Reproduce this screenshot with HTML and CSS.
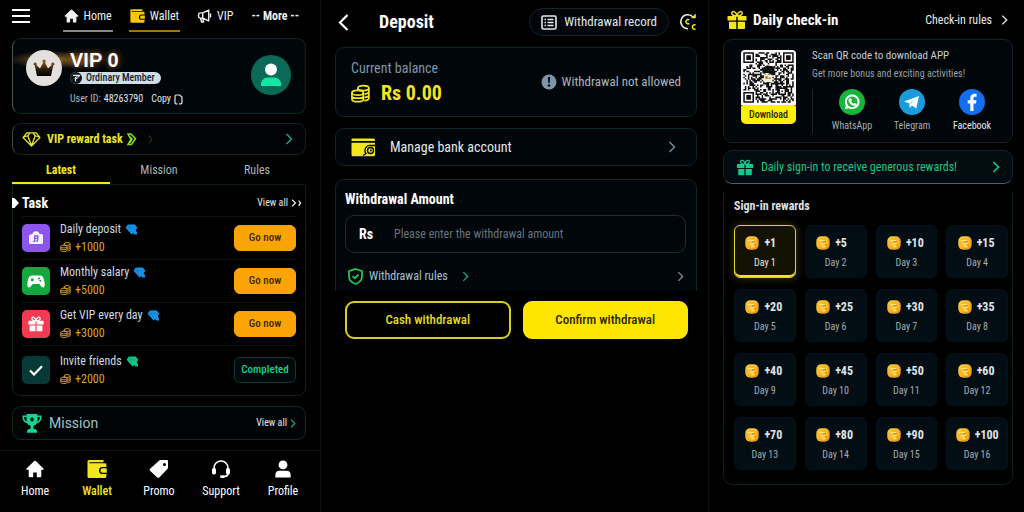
FILE: index.html
```html
<!DOCTYPE html>
<html lang="en">
<head>
<meta charset="utf-8">
<meta name="viewport" content="width=device-width, initial-scale=1">
<title>Wallet</title>
<link rel="stylesheet" href="styles.css">
</head>
<body>
<svg class="defs" aria-hidden="true">
  <defs>
    <linearGradient id="gold" x1="0" y1="0" x2="1" y2="1"><stop offset="0" stop-color="#ffd84a"/><stop offset="1" stop-color="#e88a08"/></linearGradient>
    <linearGradient id="crown-fill" x1="0" y1="0" x2="0" y2="1"><stop offset="0" stop-color="#9a6a1c"/><stop offset=".6" stop-color="#2a1a06"/><stop offset="1" stop-color="#000"/></linearGradient>
  </defs>
  <symbol id="i-home" viewBox="0 0 20 20"><path fill="currentColor" d="M10 .8a1.2 1.2 0 0 1 .9.4l8.500 8.200c.6.7.2 1.500-.6 1.500H17v7.100a1.200 1.200 0 0 1-1.200 1.200H12v-5.400H8v5.400H4.200A1.200 1.200 0 0 1 3 18v-7.100H1.200c-.8 0-1.200-.8-.6-1.500l8.500-8.200a1.200 1.200 0 0 1 .9-.4z"/></symbol>
  <symbol id="i-wallet" viewBox="0 0 20 18"><path fill="currentColor" d="M2 0h14.500v2.200H2.200v1H18a1.400 1.400 0 0 1 1.400 1.400V7H15.500a3.500 3.500 0 0 0 0 7h3.900v2.600A1.400 1.400 0 0 1 18 18H2a1.500 1.500 0 0 1-1.500-1.500V1.500A1.500 1.500 0 0 1 2 0z"/><path fill="currentColor" d="M15.600 8.300h4.200v4.400h-4.200a2.200 2.200 0 0 1 0-4.400z"/></symbol>
  <symbol id="i-horn" viewBox="0 0 20 20"><path fill="none" stroke="currentColor" stroke-width="2" stroke-linejoin="round" stroke-linecap="round" d="M7.500 5.500H4.200A2.700 2.700 0 0 0 1.500 8v2.500A2.500 2.500 0 0 0 4 13h3.500l8.500 4V1.500zM7.500 5.500V13M4.500 13.500l1.300 5h3l-1.300-5M18.600 7v4.500"/></symbol>
  <symbol id="i-chev" viewBox="0 0 8 12"><path fill="none" stroke="currentColor" stroke-width="1.600" d="M1.500 1l5 5-5 5"/></symbol>
  <symbol id="i-gem" viewBox="0 0 20 16"><path fill="none" stroke="currentColor" stroke-width="1.400" stroke-linejoin="round" d="M5 1h10l4 5-9 9-9-9zM1.500 5.500L6 4l1.500 4L10 14.500 12.500 8 14 4l4.500 1.500M6 4l2-2.500M14 4l-2-2.500"/></symbol>
  <symbol id="i-gemfill" viewBox="0 0 14 12"><path fill="currentColor" d="M3 .5h7.500L13.500 4l-2 2.800L13 9v2.500h-3L9 9.800l-2 1.700L.5 4z"/><path fill="none" stroke="#000" stroke-opacity=".2" stroke-width=".6" d="M1 4.200h11.500M5 1L4.500 4.200 7 10"/></symbol>
  <symbol id="i-coins" viewBox="0 0 20 19"><g fill="none" stroke="currentColor" stroke-width="1.800"><ellipse cx="13" cy="3.800" rx="5.800" ry="2.700"/><path d="M18.800 4v10.500c0 1.300-2 2.300-5 2.500M18.800 7.500c0 1.400-1.900 2.400-4.600 2.700M18.800 11c0 1.400-1.900 2.300-4.600 2.600M7.200 4v2"/><ellipse cx="7" cy="8.700" rx="6" ry="2.600"/><path d="M1 8.700v6.800c0 3.500 12 3.500 12 0V8.700M1 12c0 3.300 12 3.300 12 0"/></g></symbol>
  <symbol id="i-gift" viewBox="0 0 20 20"><path fill="currentColor" d="M1 6h8.300v4.500H.5v-4A.5.500 0 0 1 1 6zM10.700 6H19a.5.500 0 0 1 .5.500v4h-8.800zM2 11.800h7.300V19H3a1 1 0 0 1-1-1zM10.700 11.800H18V18a1 1 0 0 1-1 1h-6.300z"/><path fill="none" stroke="currentColor" stroke-width="1.500" d="M10 6C7 6 4.500 5 4.800 2.800 5.200.7 8.800.8 10 5.800 11.200.8 14.800.7 15.200 2.800 15.500 5 13 6 10 6z"/></symbol>
  <symbol id="i-user" viewBox="0 0 20 20"><circle cx="10" cy="5.500" r="4.900" fill="currentColor"/><path fill="currentColor" d="M1.500 19.500v-3A4.700 4.700 0 0 1 6.200 12h7.600a4.700 4.700 0 0 1 4.700 4.500v3z"/></symbol>
  <symbol id="i-coin" viewBox="0 0 14 14"><rect x=".3" y=".3" width="13.400" height="13.400" rx="4.800" fill="url(#gold)"/><rect x="1.800" y="1.600" width="10" height="10" rx="3.800" fill="#fcb92a"/><path d="M3 5.200c2-2 3.600.3 6-1M4.500 8.200h3l2-1.500M6.500 10.500h3" stroke="#ffe98c" stroke-width="1.300" fill="none"/><path d="M7 5.800h3M9 9h2" stroke="#c87405" stroke-width=".9" fill="none"/></symbol>
</svg>

<main class="screens">
  <section class="screen home">
    <header class="topbar">
      <button class="plain menu" aria-label="Menu"><svg width="18" height="14" viewBox="0 0 18 14"><path d="M0 1h18M0 7h18M0 13h18" stroke="#fff" stroke-width="2"/></svg></button>
      <nav class="topnav">
        <a href="#" class="on-home"><svg width="15" height="14"><use href="#i-home"/></svg>Home</a>
        <a href="#" class="on-wallet"><svg class="amber" width="15" height="14"><use href="#i-wallet"/></svg>Wallet</a>
        <a href="#"><svg width="15" height="14"><use href="#i-horn"/></svg>VIP</a>
        <a href="#" class="more">-- More --</a>
      </nav>
    </header>

    <section class="card profile">
      <span class="crown"><svg width="22" height="18" viewBox="0 0 22 18"><path fill="url(#crown-fill)" d="M4 17L1.800 6.500a1.500 1.500 0 1 1 1.500-.5L7 9.500l3.200-6A1.600 1.600 0 1 1 12 3.500l3 6L18.700 6a1.500 1.500 0 1 1 1.500.5L18 17z"/></svg></span>
      <div class="who">
        <h1>VIP 0</h1>
        <span class="badge"><svg width="12" height="12" viewBox="0 0 12 12"><circle cx="6" cy="6" r="6" fill="#10171c"/><path d="M3 3.300h6.500L8.500 5H5.500M4.500 6.500h3M5.500 5v4.500" stroke="#dfe9ee" stroke-width="1.200" fill="none"/></svg>Ordinary Member</span>
        <p class="uid"><span>User ID:</span> 48263790 <button class="plain copy">Copy<svg width="9" height="11" viewBox="0 0 9 11"><path d="M3.500 9.800H2A1 1 0 0 1 1 8.800V2.500A1.500 1.500 0 0 1 2.500 1h3L8 3v5.500a1.300 1.300 0 0 1-1.300 1.300H5" fill="none" stroke="#e3e8ea" stroke-width="1.200"/></svg></button></p>
      </div>
      <span class="avatar"><svg width="22" height="24" viewBox="0 0 22 24"><circle cx="11" cy="6.500" r="6" fill="#fff"/><path d="M1 23v-2a6.500 6.500 0 0 1 6.500-6.500h7A6.500 6.500 0 0 1 21 21v2z" fill="#12e8a4"/></svg></span>
    </section>

    <a href="#" class="card rewardbar">
      <svg width="19" height="15"><use href="#i-gem"/></svg>
      <span>VIP reward task</span>
      <svg class="swoosh" width="28" height="13" viewBox="0 0 28 13"><path d="M1 1h3l4.500 4.500-4 6H1l3-5zM3 4l2 2-2 4" fill="none" stroke="#7fe02a" stroke-width="1.500"/><path d="M22 2.500l3 4-3 4" fill="none" stroke="#1d4a33" stroke-width="1.200" stroke-dasharray="2 1"/></svg>
      <svg class="end teal" width="8" height="12"><use href="#i-chev"/></svg>
    </a>

    <div class="tabs" role="tablist">
      <button class="plain tab selected" role="tab" aria-selected="true">Latest</button>
      <button class="plain tab" role="tab" aria-selected="false">Mission</button>
      <button class="plain tab" role="tab" aria-selected="false">Rules</button>
    </div>

    <section class="tasks">
      <header class="tasks-head">
        <h2><svg width="7" height="10" viewBox="0 0 7 10"><path d="M0 0h2.500L7 5 2.500 10H0z" fill="#fff"/></svg>Task</h2>
        <a href="#" class="viewall">View all<svg width="12" height="8" viewBox="0 0 12 8"><path d="M1 .8L4.500 4 1 7.200" fill="none" stroke="#dfe6e8" stroke-width="1.300"/><path d="M7 1.500h1.500l2 2.500-2 3H7l1.500-3z" fill="#cdd6d8"/></svg></a>
      </header>
      <ul class="tasklist">
        <li>
          <span class="tile violet"><svg width="16" height="16" viewBox="0 0 16 16"><path fill="#f6f2ff" d="M2.500 4.500l2-.5C5 2 6 1 8.500 1.200 10.500 1.400 11 2.500 11.500 4h2A1.500 1.500 0 0 1 15 5.500v7a1.500 1.500 0 0 1-1.500 1.500h-11A1.500 1.500 0 0 1 1 12.500V6a1.500 1.500 0 0 1 1.500-1.500z"/><path d="M5 11.300h1.700V6H10l-.4 4.500M6.700 8.300h3M8.300 11h1.700" fill="none" stroke="#8b55ee" stroke-width="1.300"/></svg></span>
          <div class="info"><h3>Daily deposit<svg width="13" height="11"><use href="#i-gemfill"/></svg></h3><p><svg width="11" height="10"><use href="#i-coins"/></svg>+1000</p></div>
          <button class="go">Go now</button>
        </li>
        <li>
          <span class="tile green"><svg width="18" height="13" viewBox="0 0 18 13"><path fill="#fff" d="M5 .5h8C15.500.5 16.300 2 17 5c.7 3 1 5 .5 6.300-.6 1.500-2 1.500-3 .4L12.300 9H5.700L3.500 11.700c-1 1.100-2.400 1.100-3-.4C0 10 .3 8 1 5 1.700 2 2.500.5 5 .5z"/><circle cx="5.300" cy="4.800" r="1.500" fill="#12a83e"/><circle cx="12" cy="3.500" r="1" fill="#12a83e"/><circle cx="13.300" cy="5.800" r="1" fill="#12a83e"/></svg></span>
          <div class="info"><h3>Monthly salary<svg width="13" height="11"><use href="#i-gemfill"/></svg></h3><p><svg width="11" height="10"><use href="#i-coins"/></svg>+5000</p></div>
          <button class="go">Go now</button>
        </li>
        <li>
          <span class="tile red"><svg width="16" height="16"><use href="#i-gift"/></svg></span>
          <div class="info"><h3>Get VIP every day<svg width="13" height="11"><use href="#i-gemfill"/></svg></h3><p><svg width="11" height="10"><use href="#i-coins"/></svg>+3000</p></div>
          <button class="go">Go now</button>
        </li>
        <li>
          <span class="tile deep"><svg width="14" height="11" viewBox="0 0 14 11"><path d="M1 5.500l4 4L13 1.200" fill="none" stroke="#fff" stroke-width="2.200"/></svg></span>
          <div class="info"><h3>Invite friends<svg class="mint" width="13" height="11"><use href="#i-gemfill"/></svg></h3><p><svg width="11" height="10"><use href="#i-coins"/></svg>+2000</p></div>
          <button class="go done">Completed</button>
        </li>
      </ul>
    </section>

    <section class="card mission">
      <svg width="20" height="19" viewBox="0 0 20 19"><path fill="#14d491" d="M4.500 0h11v6.500c0 3-1.500 4.700-4 5.200V15h2l1.500 2v1.800H5V17l1.500-2h2v-3.300c-2.500-.5-4-2.200-4-5.200z"/><path d="M4.800 2.200H1.200c0 4 1 5.800 4 6.300M15.200 2.200h3.600c0 4-1 5.800-4 6.300" fill="none" stroke="#14d491" stroke-width="1.600"/><rect x="8.500" y="3.500" width="3" height="4" rx="1" fill="#02140f"/></svg>
      <h2>Mission</h2>
      <a href="#" class="viewall">View all<svg class="teal" width="6" height="9"><use href="#i-chev"/></svg></a>
    </section>

    <nav class="bottomnav">
      <a href="#"><svg width="20" height="18"><use href="#i-home"/></svg>Home</a>
      <a href="#" class="active"><svg width="20" height="18"><use href="#i-wallet"/></svg>Wallet</a>
      <a href="#"><svg width="20" height="18" viewBox="0 0 20 18"><path fill="#fff" fill-rule="evenodd" d="M12 0h6a1 1 0 0 1 1 1v6.500a2 2 0 0 1-.6 1.400L10.500 17.300a1.800 1.800 0 0 1-2.500 0L1.300 11a1.600 1.600 0 0 1 0-2.400L10 .8A2.500 2.500 0 0 1 12 0zm3.500 3a1.500 1.500 0 1 0 0 3 1.500 1.500 0 0 0 0-3z"/></svg>Promo</a>
      <a href="#"><svg width="20" height="18" viewBox="0 0 20 18"><path d="M3 9.500V8a7 7 0 0 1 14 0v5.500c0 2-1.500 2.800-3.500 3" fill="none" stroke="#fff" stroke-width="1.600"/><rect x="1" y="8" width="4" height="6.500" rx="1.800" fill="#fff"/><rect x="15" y="8" width="4" height="6.500" rx="1.800" fill="#fff"/><rect x="9" y="15.300" width="5" height="2.600" rx="1.300" fill="#fff"/></svg>Support</a>
      <a href="#"><svg width="20" height="18"><use href="#i-user"/></svg>Profile</a>
    </nav>
  </section>

  <section class="screen wallet">
    <header class="wallet-head">
      <button class="plain" aria-label="Back"><svg width="11" height="17" viewBox="0 0 11 17"><path d="M9.500 1L2 8.500 9.500 16" fill="none" stroke="#fff" stroke-width="2.200"/></svg></button>
      <h2>Deposit</h2>
      <button class="pill"><svg width="16" height="15" viewBox="0 0 16 15"><rect x="1" y="1" width="14" height="13" rx="1.500" fill="none" stroke="#e6ecee" stroke-width="1.600"/><path d="M3.500 4.500H5M6.500 4.500h6M3.500 7.500H5M6.500 7.500h6M3.500 10.500H5M6.500 10.500h6" stroke="#e6ecee" stroke-width="1.400"/></svg>Withdrawal record</button>
      <button class="plain" aria-label="Refresh balance"><svg width="18" height="18" viewBox="0 0 18 18"><path d="M9 15.700A7 7 0 1 1 14 4" fill="none" stroke="#e8ecdc" stroke-width="1.500"/><path d="M12 5.200h4.800V.6z" fill="#f3e51e"/><path d="M10.300 7a2.100 2.100 0 1 0 0 3.300M16.500 12a2.200 2.200 0 1 0 0 4" fill="none" stroke="#f3e51e" stroke-width="1.500"/></svg></button>
    </header>

    <section class="card balance">
      <div>
        <p class="label">Current balance</p>
        <p class="amount"><svg width="19" height="19"><use href="#i-coins"/></svg>Rs 0.00</p>
      </div>
      <p class="notice"><svg width="16" height="16" viewBox="0 0 16 16"><circle cx="8" cy="8" r="7.500" fill="#7c95a8"/><path d="M6.900 3h2.200l-.4 6H7.300z" fill="#02060a"/><circle cx="8" cy="11.500" r="1.200" fill="#02060a"/></svg>Withdrawal not allowed</p>
    </section>

    <a href="#" class="card bank">
      <svg width="25" height="19" viewBox="0 0 25 19"><path fill="#f3e51e" d="M1.500.5h21a1.500 1.500 0 0 1 1.500 1.500v1H.5V1.500a1 1 0 0 1 1-1zM.5 4.800H24v12a1.500 1.500 0 0 1-1.500 1.500H2A1.500 1.500 0 0 1 .5 16.800z"/><path d="M24.500 7.500h-5a5 5 0 0 0-4.500 8l-3 2" fill="none" stroke="#02060a" stroke-width="1.300"/><circle cx="19.500" cy="12.500" r="3" fill="none" stroke="#02060a" stroke-width="1.300"/><circle cx="19.800" cy="12.500" r="1" fill="#02060a"/></svg>
      <span>Manage bank account</span>
      <svg class="end slate" width="8" height="12"><use href="#i-chev"/></svg>
    </a>

    <form class="withdraw">
      <div class="card sheet">
        <h3><label for="amount">Withdrawal Amount</label></h3>
        <div class="field"><span>Rs</span><input id="amount" type="text" placeholder="Please enter the withdrawal amount"></div>
        <a href="#" class="rules"><svg width="15" height="17" viewBox="0 0 15 17"><path d="M7.500 1L14 3.200v5.300c0 3.500-2.600 6-6.500 7.500C3.600 14.500 1 12 1 8.500V3.200z" fill="none" stroke="#1fc65c" stroke-width="1.800"/><path d="M4.500 8.300l2.300 2L10.500 6.500" fill="none" stroke="#1fc65c" stroke-width="1.800"/></svg>Withdrawal rules<svg class="teal near" width="7" height="11"><use href="#i-chev"/></svg><svg class="end grey" width="7" height="11"><use href="#i-chev"/></svg></a>
      </div>
      <div class="actions">
        <button type="button" class="outline">Cash withdrawal</button>
        <button type="button" class="solid">Confirm withdrawal</button>
      </div>
    </form>
  </section>

  <section class="screen checkin">
    <header class="check-head">
      <svg class="yellow" width="20" height="20"><use href="#i-gift"/></svg>
      <h2>Daily check-in</h2>
      <a href="#">Check-in rules<svg width="7" height="12"><use href="#i-chev"/></svg></a>
    </header>

    <section class="card app">
      <div class="qrbox">
        <svg id="qr" class="qr" viewBox="0 0 36 36" role="img" aria-label="QR code"></svg>
        <button class="download">Download</button>
      </div>
      <div class="appinfo">
        <h3>Scan QR code to download APP</h3>
        <p>Get more bonus and exciting activities!</p>
        <div class="social">
          <a href="#"><svg width="26" height="26" viewBox="0 0 26 26"><circle cx="13" cy="13" r="13" fill="#17b53b"/><path d="M5.800 20.200l1-3.900A7.300 7.300 0 1 1 9.700 19.200z" fill="#fff"/><circle cx="13.200" cy="12.800" r="5.400" fill="#17b53b"/><path d="M10.500 9.200l1.500.1.900 2-.8 1a5 5 0 0 0 2.600 2.500l1.100-.9 1.900 1c0 1.300-1 2-2.300 2-3.200-.4-6-3.600-5.900-6 .1-.8.500-1.400 1-1.700z" fill="#fff"/></svg>WhatsApp</a>
          <a href="#"><svg width="26" height="26" viewBox="0 0 26 26"><circle cx="13" cy="13" r="13" fill="#1b9bdc"/><path d="M5 12.600L20 7l-2.700 12.600-4.200-3-2.200 2.200-.9-4.500z" fill="#fff"/><path d="M10 14.300l7-4.800-5.500 5.900-.6 3.400z" fill="#b9dcf2"/></svg>Telegram</a>
          <a href="#" class="bright"><svg width="26" height="26" viewBox="0 0 26 26"><circle cx="13" cy="13" r="13" fill="#146ff0"/><path d="M11.300 22v-7.500H8.700v-3.200h2.600V9.200c0-3 1.700-4.500 4.300-4.500.9 0 1.600.1 2 .2v2.900H16c-1.200 0-1.500.6-1.500 1.600v1.900h3l-.5 3.200h-2.500V22z" fill="#fff"/></svg>Facebook</a>
        </div>
      </div>
    </section>

    <a href="#" class="card banner"><svg width="18" height="17"><use href="#i-gift"/></svg><span>Daily sign-in to receive generous rewards!</span><svg class="end" width="8" height="12"><use href="#i-chev"/></svg></a>

    <section class="rewards">
      <h3>Sign-in rewards</h3>
      <ol class="days">
        <li class="today"><b><svg width="14" height="14"><use href="#i-coin"/></svg>+1</b><span>Day 1</span></li>
        <li><b><svg width="14" height="14"><use href="#i-coin"/></svg>+5</b><span>Day 2</span></li>
        <li><b><svg width="14" height="14"><use href="#i-coin"/></svg>+10</b><span>Day 3</span></li>
        <li><b><svg width="14" height="14"><use href="#i-coin"/></svg>+15</b><span>Day 4</span></li>
        <li><b><svg width="14" height="14"><use href="#i-coin"/></svg>+20</b><span>Day 5</span></li>
        <li><b><svg width="14" height="14"><use href="#i-coin"/></svg>+25</b><span>Day 6</span></li>
        <li><b><svg width="14" height="14"><use href="#i-coin"/></svg>+30</b><span>Day 7</span></li>
        <li><b><svg width="14" height="14"><use href="#i-coin"/></svg>+35</b><span>Day 8</span></li>
        <li><b><svg width="14" height="14"><use href="#i-coin"/></svg>+40</b><span>Day 9</span></li>
        <li><b><svg width="14" height="14"><use href="#i-coin"/></svg>+45</b><span>Day 10</span></li>
        <li><b><svg width="14" height="14"><use href="#i-coin"/></svg>+50</b><span>Day 11</span></li>
        <li><b><svg width="14" height="14"><use href="#i-coin"/></svg>+60</b><span>Day 12</span></li>
        <li><b><svg width="14" height="14"><use href="#i-coin"/></svg>+70</b><span>Day 13</span></li>
        <li><b><svg width="14" height="14"><use href="#i-coin"/></svg>+80</b><span>Day 14</span></li>
        <li><b><svg width="14" height="14"><use href="#i-coin"/></svg>+90</b><span>Day 15</span></li>
        <li><b><svg width="14" height="14"><use href="#i-coin"/></svg>+100</b><span>Day 16</span></li>
      </ol>
    </section>
  </section>
</main>
<script src="qr.js"></script>
</body>
</html>
```
FILE: styles.css
```css
* { box-sizing: border-box; }

body {
  margin: 0;
  background: #000;
  color: #e3e8ea;
  font: 12px/18px "Roboto Condensed", Roboto, sans-serif;
}

h1, h2, h3, p, ul, ol { margin: 0; padding: 0; }
ul, ol { list-style: none; }
a { color: inherit; text-decoration: none; }
button, input { font: inherit; color: inherit; }
button { cursor: pointer; padding: 0; }
svg { display: block; flex: none; }

.defs { position: absolute; width: 0; height: 0; }
.plain { background: none; border: 0; }
.end { margin-left: auto; }
.amber { color: #f7c80c; }
.yellow { color: #f3e51e; }
.teal { color: #1fa080; }
.slate { color: #71869a; }
.grey { color: #7f898e; }

.screens {
  display: grid;
  grid-template-columns: 320fr 388fr 316fr;
  min-height: 100vh;
}
.screen { display: flex; flex-direction: column; min-width: 0; }
.screen + .screen { border-left: 1px solid #0c1114; }

.card {
  border: 1px solid #0e2526;
  border-radius: 9px;
  background: #01060a;
}

/* Home */
.home { padding-top: 6px; }
.home > * { margin-left: 12px; margin-right: 14px; }
.topbar { display: flex; align-items: flex-start; justify-content: space-between; margin-bottom: 6px; }
.menu { padding-top: 3px; }
.topnav { display: flex; gap: 16px; padding-right: 6px; color: #eef1f2; white-space: nowrap; }
.topnav a {
  display: flex;
  align-items: center;
  gap: 5px;
  padding: 1px 1px 5px;
  border-bottom: 2px solid transparent;
}
.topnav .on-home { border-color: #858a8c; }
.topnav .on-wallet { border-color: #a8720c; }
.topnav .more { font-weight: 700; }

.profile {
  display: flex;
  align-items: flex-start;
  gap: 8px;
  padding: 11px 14px 6px 13px;
  background: radial-gradient(ellipse 46px 9px at 14% 28%, #8d6524, transparent), #01060a;
  border-left-color: #4b5657;
}
.crown, .avatar { display: grid; place-items: center; border-radius: 50%; flex: none; }
.crown { width: 36px; height: 36px; background: #e4e0dd; }
.avatar { width: 40px; height: 40px; margin: 5px 0 0 auto; background: #0b6a57; }
.who h1 {
  font: 700 20px/20px "Liberation Sans", Arial, sans-serif;
  color: #fff;
  text-shadow: 0 0 6px #c86a20;
}
.badge {
  display: flex;
  align-items: center;
  gap: 4px;
  width: max-content;
  margin-top: 2px;
  padding-right: 6px;
  border-radius: 6px;
  background: #cfdfe6;
  color: #142029;
  font-size: 10px;
  font-weight: 500;
  line-height: 12px;
}
.uid { display: flex; align-items: center; gap: 3px; margin-top: 7px; font-size: 10px; line-height: 16px; }
.uid span { color: #a9b4b9; }
.copy { display: inline-flex; align-items: center; gap: 3px; margin-left: 5px; }

.rewardbar {
  display: flex;
  align-items: center;
  gap: 6px;
  margin-top: 9px;
  padding: 7px 12px 7px 9px;
  line-height: 16px;
  background: #010304;
  border-left-color: #3d4849;
  color: #ece52c;
  font-weight: 700;
}
.swoosh { margin-left: -2px; }

.tabs { display: grid; grid-template-columns: repeat(3, 1fr); border-bottom: 1px solid #0a1b1b; }
.tab { padding: 6px 0 3px; color: #a9b6bd; border-bottom: 2px solid transparent; line-height: 18px; }
.tab.selected { color: #f3e51e; font-weight: 700; border-color: #f3e51e; }

.tasks { border: solid #0c2523; border-width: 0 1px 1px; border-radius: 0 0 9px 9px; }
.tasks-head { display: flex; align-items: center; justify-content: space-between; padding: 9px 2px 4px 0; }
.tasks-head h2 { display: flex; align-items: center; gap: 3px; font-size: 14px; line-height: 18px; color: #fff; margin-left: -1px; }
.viewall { display: flex; align-items: center; gap: 3px; font-size: 10px; }
.tasklist { padding: 0 9px; }
.tasklist li { display: flex; align-items: center; gap: 10px; padding: 7px 0 7px; border-top: 1px solid #091514; }
.tasklist li:last-child { padding: 10px 0 11px; }
.tile { display: grid; place-items: center; width: 28px; height: 28px; border-radius: 5px; color: #fff; flex: none; }
.violet { background: #8b55ee; }
.green { background: #12a83e; }
.red { background: #f23b53; }
.deep { background: #073a37; }
.info { flex: 1; margin: -4px 0; }
.info h3 { display: flex; align-items: center; gap: 4px; font-weight: 400; font-size: 12px; line-height: 18px; color: #cfdbe1; }
.info h3 svg { color: #1593e6; }
.info h3 .mint { color: #14c486; }
.info p { display: flex; align-items: center; gap: 4px; color: #d9a52a; line-height: 18px; }
.go {
  width: 62px;
  border: 1px solid #fca405;
  border-radius: 6px;
  background: #fca405;
  color: #3a2606;
  font-size: 11px;
  font-weight: 500;
  line-height: 24px;
}
.go.done { background: #01090a; border-color: #0c3b33; color: #14cf92; }

.mission { display: flex; align-items: center; gap: 7px; margin-top: 10px; padding: 6px 9px; border-color: #0a2b27; background: #010405; }
.mission h2 { font: 400 14px/20px Roboto, sans-serif; color: #9fc0c8; }
.mission .viewall { margin-left: auto; }

.home > .bottomnav { margin: 10px 0 0; }
.bottomnav { display: grid; grid-template-columns: repeat(5, 1fr); padding: 9px 6px 0 4px; border-top: 1px solid #101617; color: #fff; }
.bottomnav a { display: flex; flex-direction: column; align-items: center; gap: 4px; }
.bottomnav .active { color: #f3e51e; font-weight: 500; }

/* Wallet */
.wallet { padding: 8px 11px 12px 14px; }
.wallet-head { display: flex; align-items: center; gap: 10px; padding-left: 3px; }
.wallet-head h2 { margin-left: 20px; margin-right: auto; font-size: 18px; line-height: 24px; color: #fff; }
.pill {
  display: flex;
  align-items: center;
  gap: 7px;
  padding: 4px 11px;
  border: 1px solid #12242c;
  border-radius: 14px;
  background: #01060a;
  font-size: 13px;
}
.balance { display: flex; align-items: center; justify-content: space-between; margin-top: 11px; padding: 9px 15px 9px 15px; }
.balance .label { color: #7e96a8; font-size: 14px; line-height: 22px; }
.balance .amount { display: flex; align-items: center; gap: 11px; color: #f3e51e; font-size: 20px; font-weight: 700; line-height: 28px; }
.notice { display: flex; align-items: center; gap: 5px; color: #adb6ba; font-size: 13px; }
.bank { display: flex; align-items: center; gap: 14px; margin-top: 11px; padding: 8px 20px 8px 15px; font-size: 14px; line-height: 20px; }
.sheet { margin-top: 13px; padding: 9px 10px 2px 9px; border-bottom: 0; border-radius: 9px 9px 0 0; }
.sheet h3 { color: #fff; font-size: 14px; line-height: 20px; }
.field {
  display: flex;
  align-items: center;
  margin-top: 6px;
  padding: 8px 13px;
  border: 1px solid #12303a;
  border-radius: 9px;
}
.field span { width: 35px; color: #fff; font-size: 14px; line-height: 20px; font-weight: 700; }
.field input { flex: 1; min-width: 0; border: 0; padding: 0; background: none; outline: 0; line-height: 20px; }
.field input::placeholder { color: #66757e; opacity: 1; }
.rules { display: flex; align-items: center; gap: 6px; padding: 14px 2px 4px 3px; color: #a7c0ca; }
.near { margin-left: 8px; }
.actions { display: grid; grid-template-columns: 1fr 1fr; gap: 12px; margin-top: 10px; padding: 0 9px 0 10px; }
.actions button { border: 2px solid #d9cf22; border-radius: 9px; font-size: 13px; line-height: 34px; font-weight: 500; }
.outline { background: #010101; color: #e2d92a; }
.actions .solid { background: #ffe600; border-color: #ffe600; color: #2b2603; }

/* Check-in */
.checkin { padding: 9px 11px 12px 14px; }
.check-head { display: flex; align-items: center; gap: 6px; padding: 0 5px 0 4px; }
.check-head h2 { color: #fff; font-size: 15px; line-height: 22px; }
.check-head a { display: flex; align-items: center; gap: 9px; margin-left: auto; }
.app { display: flex; align-items: flex-start; gap: 16px; margin-top: 8px; padding: 10px 10px 9px 17px; }
.qrbox { width: 55px; flex: none; }
.qr { width: 100%; border-radius: 4px 4px 0 0; background: #fff; }
.download { display: block; width: 100%; border: 0; border-radius: 2px 2px 5px 5px; background: #fff100; color: #282506; font-size: 10px; line-height: 19px; font-weight: 500; }
.appinfo { flex: 1; min-width: 0; }
.appinfo h3 { font-weight: 400; font-size: 11px; line-height: 14px; color: #c8cfd2; margin-top: -1px; }
.appinfo p { margin-top: 4px; font-size: 10px; line-height: 14px; color: #98a3a8; }
.social { display: grid; grid-template-columns: repeat(3, 1fr); margin-top: 8px; padding-left: 9px; border-left: 1px solid #1a2328; }
.social a { display: flex; flex-direction: column; align-items: center; gap: 4px; font-size: 10px; line-height: 14px; color: #a3b0b6; }
.social .bright { color: #e6eaec; }
.banner {
  display: flex;
  align-items: center;
  gap: 7px;
  margin-top: 7px;
  padding: 6px 12px;
  line-height: 20px;
  color: #12c98a;
  background: #020b0f;
  border-bottom-color: #536168;
}
.rewards {
  margin-top: 8px;
  padding: 5px 4px 14px 10px;
  border: solid #0d1e20;
  border-width: 0 1px 1px;
  border-radius: 0 0 9px 9px;
}
.rewards h3 { color: #dde2e4; font-size: 12px; font-weight: 700; line-height: 18px; }
.days { display: grid; grid-template-columns: repeat(4, 1fr); gap: 11px 9px; margin-top: 10px; }
.days li {
  display: flex;
  flex-direction: column;
  align-items: center;
  padding: 7px 0 4px;
  border: 1px solid #03131a;
  border-radius: 6px;
  background: #020d14;
}
.days b { display: flex; align-items: center; gap: 5px; min-width: 39px; font-size: 12px; font-weight: 700; line-height: 20px; color: #e0e5e8; }
.days span { font-size: 10px; line-height: 20px; color: #a3adb2; }
.days .today {
  border-color: #dcd32a;
  background: #131203;
  box-shadow: inset 0 -2px 0 #f3e51e, 0 0 8px #3d3a08;
}
.days .today span { color: #e6e8dc; }
```
FILE: qr.js
```js
// Draws the download code as a grid of square modules.
(function () {
  var size = 33, pad = 1.5, d = "", seed = 48263790;
  function rand() {
    seed = (seed * 1103515245 + 12345) % 2147483648;
    return seed / 2147483648;
  }
  function ring(x, y, n) {
    var m = Math.max(Math.abs(x), Math.abs(y));
    return m <= n ? m !== n - 1 : null;
  }
  function dark(x, y) {
    var corners = [[3, 3], [size - 4, 3], [3, size - 4]];
    for (var i = 0; i < 3; i++) {
      var dx = x - corners[i][0], dy = y - corners[i][1];
      if (Math.max(Math.abs(dx), Math.abs(dy)) === 4) return false;
      var r = ring(dx, dy, 3);
      if (r !== null) return r;
    }
    var a = ring(x - 25, y - 25, 2);
    if (a !== null) return a;
    return rand() > 0.48;
  }
  for (var y = 0; y < size; y++) {
    for (var x = 0; x < size; x++) {
      if (dark(x, y)) d += "M" + (x + pad) + " " + (y + pad) + "h1v1h-1z";
    }
  }
  document.getElementById("qr").innerHTML =
    '<path d="' + d + '" fill="#111"/>' +
    '<path d="M14 12l3-2 5 1v4h-8z" fill="#111"/><rect x="15" y="16" width="5" height="5" fill="#f2eeda"/><path d="M16 17h1.500v2H16zM18 18h1.500v1H18z" fill="#a58a20"/>';
})();
```
